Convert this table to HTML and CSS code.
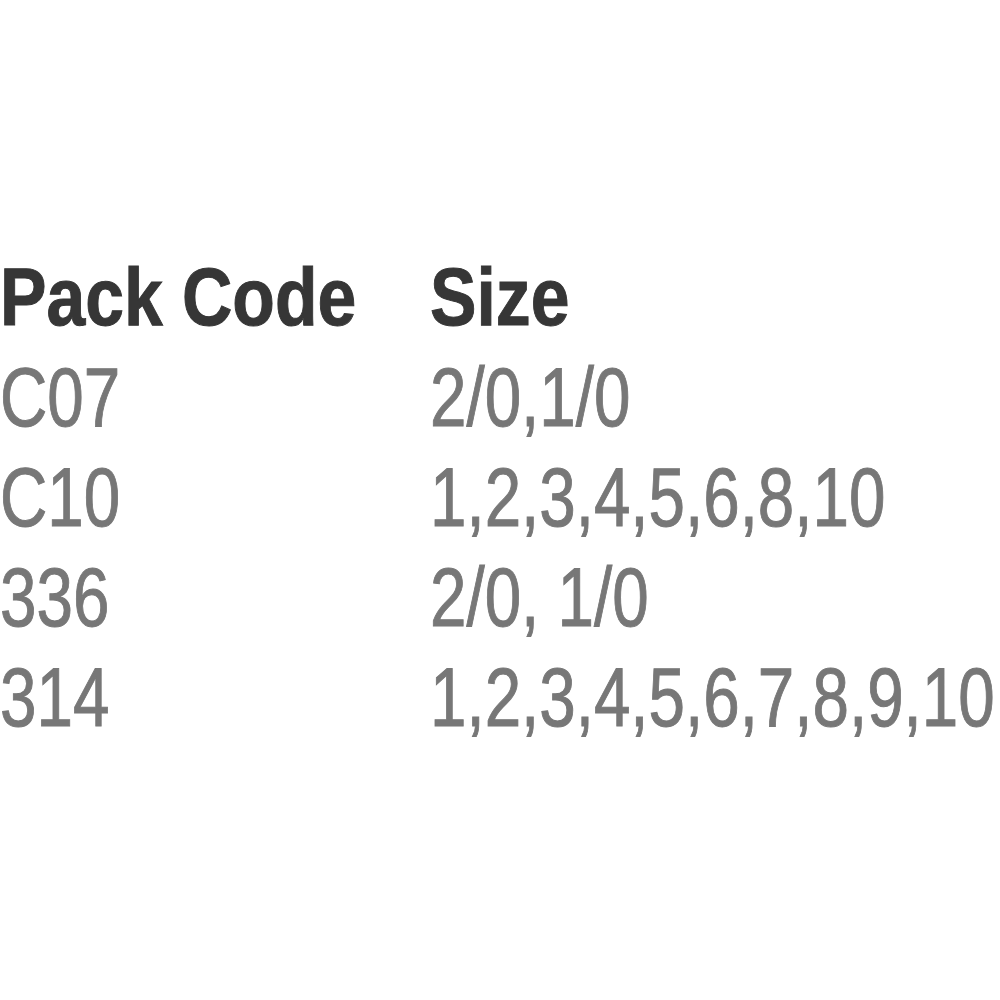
FILE: index.html
```html
<!DOCTYPE html>
<html>
<head>
<meta charset="utf-8">
<link rel="stylesheet" href="styles.css">
</head>
<body>
<div class="table">
  <div class="cell head"><span class="txt">Pack Code</span></div>
  <div class="cell head"><span class="txt">Size</span></div>
  <div class="cell"><span class="txt">C07</span></div>
  <div class="cell"><span class="txt">2/0,1/0</span></div>
  <div class="cell"><span class="txt">C10</span></div>
  <div class="cell"><span class="txt">1,2,3,4,5,6,8,10</span></div>
  <div class="cell"><span class="txt">336</span></div>
  <div class="cell"><span class="txt">2/0, 1/0</span></div>
  <div class="cell"><span class="txt">314</span></div>
  <div class="cell"><span class="txt">1,2,3,4,5,6,7,8,9,10</span></div>
</div>
</body>
</html>
```
FILE: styles.css
```css
html, body {
  margin: 0;
  background: #ffffff;
}
body {
  width: 1000px;
  height: 1000px;
  overflow: hidden;
}
.table {
  display: grid;
  grid-template-columns: 430px 570px;
  padding-top: 247px;
  font-family: "Liberation Sans", Arial, sans-serif;
  font-size: 84px;
  line-height: 100px;
  color: #777777;
  white-space: nowrap;
}
.cell {
  height: 100px;
}
.txt {
  display: inline-block;
  transform: scaleX(0.78);
  transform-origin: 0 50%;
  -webkit-text-stroke: 1px #777777;
}
.head {
  font-weight: bold;
  color: #363636;
  font-size: 81px;
}
.head .txt {
  transform: scaleX(0.86);
  -webkit-text-stroke: 1px #363636;
}
```
